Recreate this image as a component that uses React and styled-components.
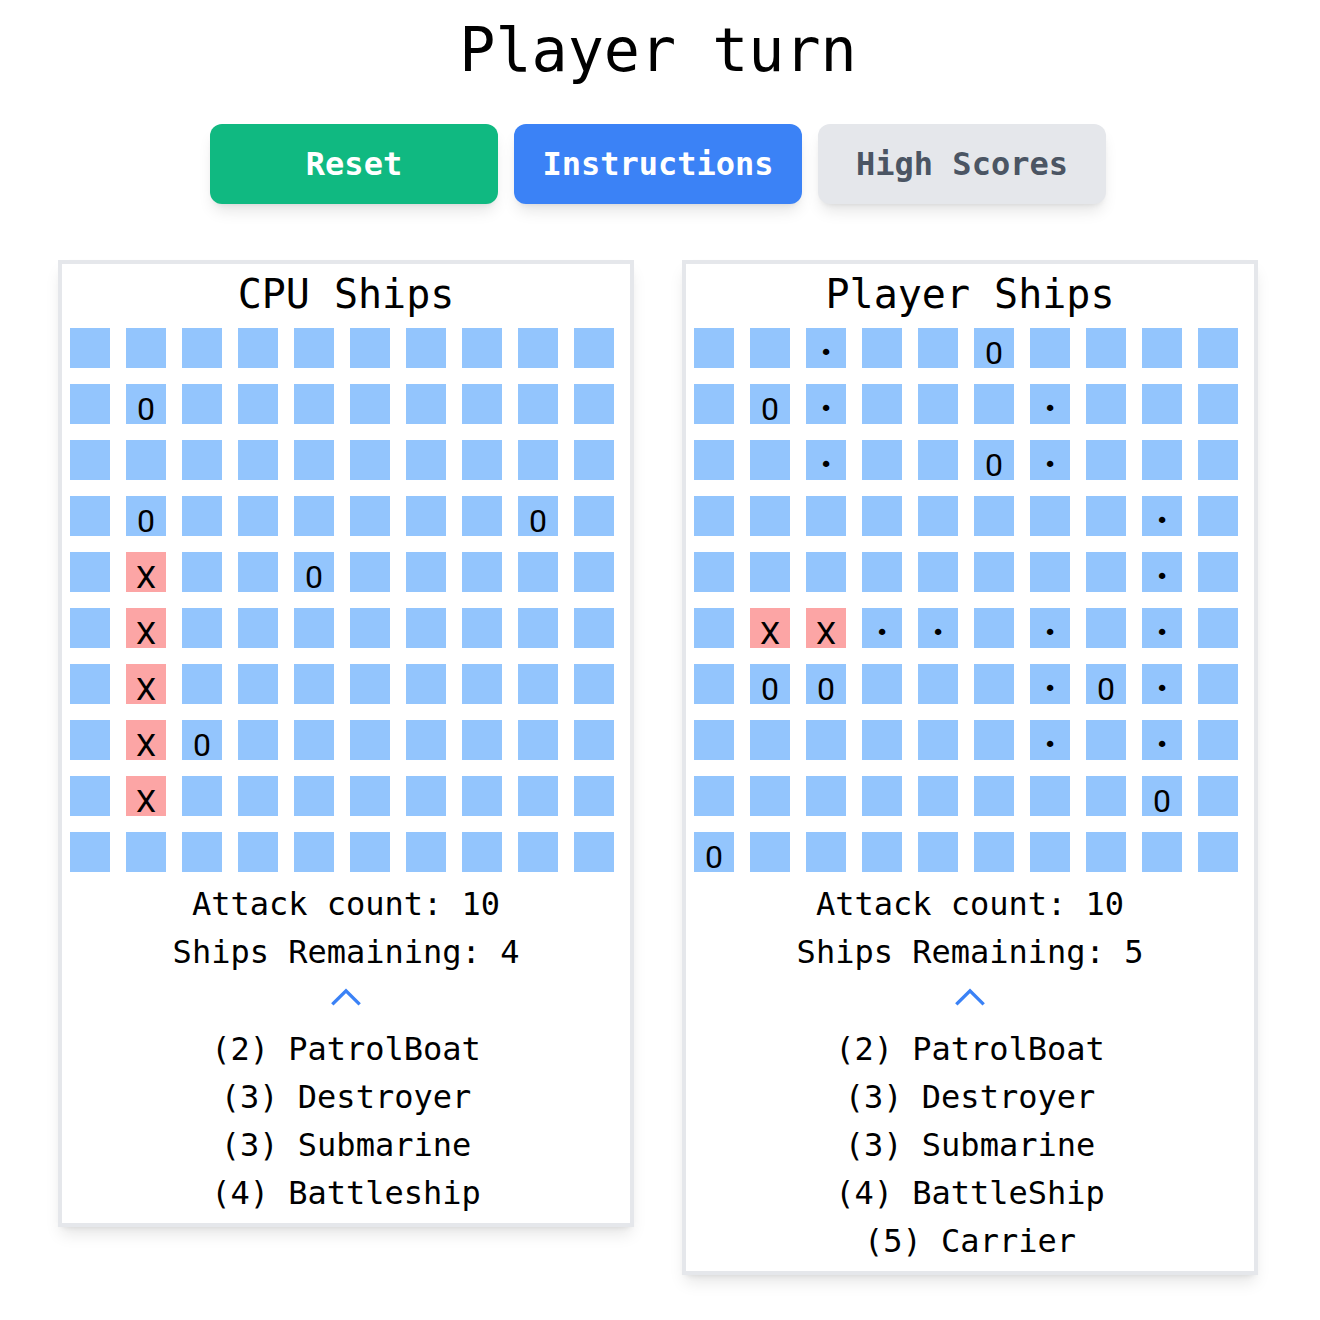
import React from "react";
import styled, { createGlobalStyle } from "styled-components";

const cpuGrid = [
  "..........",
  ".o........",
  "..........",
  ".o......o.",
  ".x..o.....",
  ".x........",
  ".x........",
  ".xo.......",
  ".x........",
  "..........",
];

const playerGrid = [
  "..s..o....",
  ".os...s...",
  "..s..os...",
  "........s.",
  "........s.",
  ".xxss.s.s.",
  ".oo...sos.",
  "......s.s.",
  "........o.",
  "o.........",
];

const marks = { ".": "", o: "0", x: "X", s: "•" };

const boards = [
  {
    title: "CPU Ships",
    grid: cpuGrid,
    attacks: 10,
    remaining: 4,
    ships: ["(2) PatrolBoat", "(3) Destroyer", "(3) Submarine", "(4) Battleship"],
  },
  {
    title: "Player Ships",
    grid: playerGrid,
    attacks: 10,
    remaining: 5,
    ships: [
      "(2) PatrolBoat",
      "(3) Destroyer",
      "(3) Submarine",
      "(4) BattleShip",
      "(5) Carrier",
    ],
  },
];

export default function App() {
  return (
    <>
      <GlobalStyle />
      <Page>
        <Title>Player turn</Title>
        <ButtonRow>
          <Button $variant="green">Reset</Button>
          <Button $variant="blue">Instructions</Button>
          <Button $variant="gray">High Scores</Button>
        </ButtonRow>
        <Boards>
          {boards.map((b) => (
            <Panel key={b.title}>
              <PanelTitle>{b.title}</PanelTitle>
              <Grid>
                {b.grid.map((row, r) =>
                  row.split("").map((c, i) => (
                    <Cell key={`${r}-${i}`} $hit={c === "x"} $dot={c === "s"}>
                      {marks[c]}
                    </Cell>
                  ))
                )}
              </Grid>
              <Line>Attack count: {b.attacks}</Line>
              <Line>Ships Remaining: {b.remaining}</Line>
              <Toggle>
                <svg
                  width="40"
                  height="40"
                  viewBox="0 0 24 24"
                  fill="none"
                  stroke="#3b82f6"
                  strokeWidth="2"
                  strokeLinecap="square"
                >
                  <path d="M4.5 15.75l7.5-7.5 7.5 7.5" />
                </svg>
              </Toggle>
              {b.ships.map((s) => (
                <Line key={s}>{s}</Line>
              ))}
            </Panel>
          ))}
        </Boards>
      </Page>
    </>
  );
}

const GlobalStyle = createGlobalStyle`
  body {
    margin: 0;
    background: #ffffff;
    font-family: "DejaVu Sans Mono", "Liberation Mono", monospace;
    color: #000;
  }
`;

const Page = styled.div`
  display: flex;
  flex-direction: column;
  align-items: center;
  padding-top: 18px;
  padding-right: 4px;
  padding-bottom: 40px;
`;

const Title = styled.h1`
  margin: 0;
  font-size: 60px;
  font-weight: 400;
  line-height: 64px;
`;

const ButtonRow = styled.div`
  display: flex;
  gap: 16px;
  margin-top: 42px;
`;

const palette = {
  green: { bg: "#10b981", fg: "#ffffff" },
  blue: { bg: "#3b82f6", fg: "#ffffff" },
  gray: { bg: "#e5e7eb", fg: "#4b5563" },
};

const Button = styled.button`
  width: 288px;
  height: 80px;
  border: none;
  border-radius: 12px;
  font-family: inherit;
  font-size: 32px;
  font-weight: 700;
  background: ${(p) => palette[p.$variant].bg};
  color: ${(p) => palette[p.$variant].fg};
  box-shadow: 0 10px 15px -3px rgba(0, 0, 0, 0.1),
    0 4px 6px -4px rgba(0, 0, 0, 0.1);
  cursor: pointer;
`;

const Boards = styled.div`
  display: flex;
  align-items: flex-start;
  gap: 48px;
  margin-top: 56px;
`;

const Panel = styled.div`
  width: 576px;
  box-sizing: border-box;
  border: 4px solid #e5e7eb;
  padding-bottom: 6px;
  text-align: center;
  box-shadow: 0 10px 15px -3px rgba(0, 0, 0, 0.1),
    0 4px 6px -4px rgba(0, 0, 0, 0.1);
`;

const PanelTitle = styled.div`
  font-size: 40px;
  line-height: 56px;
  padding-top: 2px;
  margin-bottom: -2px;
`;

const Grid = styled.div`
  display: grid;
  grid-template-columns: repeat(10, 40px);
  gap: 16px;
  padding: 8px;
`;

const Cell = styled.div`
  width: 40px;
  height: 40px;
  box-sizing: border-box;
  padding-top: 5px;
  background: ${(p) => (p.$hit ? "#fca5a5" : "#93c5fd")};
  font-family: ${(p) =>
    p.$dot ? "\"DejaVu Sans Mono\", monospace" : "Roboto, sans-serif"};
  font-size: ${(p) => (p.$dot ? "22px" : "32px")};
  line-height: 40px;
  text-align: center;
`;

const Line = styled.div`
  font-size: 32px;
  line-height: 48px;
  white-space: pre;
`;

const Toggle = styled.div`
  display: flex;
  justify-content: center;
  height: 49px;
  svg {
    margin-top: 1px;
  }
`;
